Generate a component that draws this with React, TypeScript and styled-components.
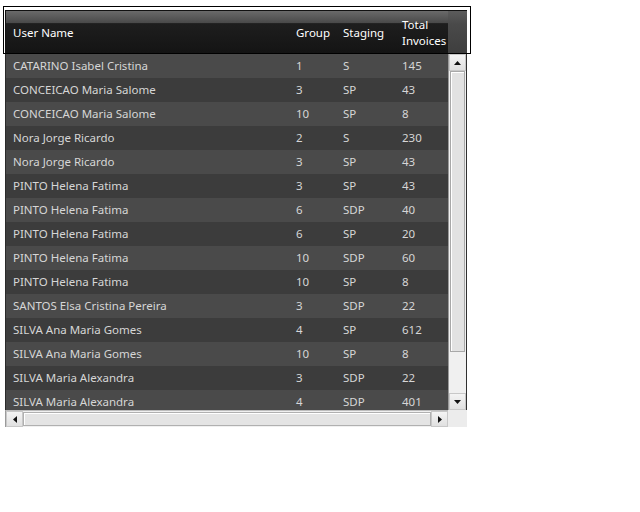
import React from "react";
import styled, { createGlobalStyle } from "styled-components";

const Global = createGlobalStyle`
  html, body { margin: 0; padding: 0; background: #ffffff; }
  body { font-family: "Noto Sans", "Open Sans", sans-serif; }
`;

const Frame = styled.div`
  position: relative;
  margin: 10px 0 0 5px;
  width: 462px;
  display: flex;
  flex-direction: column;
`;

const Focus = styled.div`
  position: absolute;
  left: -2px;
  top: -4px;
  width: 468px;
  height: 48px;
  border: 1px solid #000;
  box-sizing: border-box;
  pointer-events: none;
`;

const Line = styled.div`
  display: flex;
`;

const COLS = "283px 47px 59px 54px";

const Header = styled.div`
  width: 443px;
  height: 44px;
  box-sizing: border-box;
  padding-top: 2px;
  display: grid;
  grid-template-columns: ${COLS};
  align-items: center;
  border-top: 1px solid #111;
  border-left: 1px solid #111;
  border-bottom: 1px solid #0a0a0a;
  background: linear-gradient(
    to bottom,
    #6a6a6a 0%,
    #4a4a4a 28%,
    #1e1e1e 30%,
    #141414 100%
  );
`;

const HeaderFiller = styled.div`
  width: 19px;
  height: 44px;
  box-sizing: border-box;
  border-top: 1px solid #111;
  background: linear-gradient(to bottom, #5c5c5c 0%, #4a4a4a 30%, #3e3e3e 100%);
`;

const HeadCell = styled.div`
  padding-left: 7px;
  color: #ffffff;
  font-size: 11.5px;
  line-height: 16px;
`;

const Rows = styled.div`
  width: 443px;
  height: 356px;
  box-sizing: border-box;
  overflow: hidden;
  border-left: 1px solid #2a2a2a;
  background: #404040;
`;

const Row = styled.div<{ $alt: boolean }>`
  display: grid;
  grid-template-columns: ${COLS};
  height: 24px;
  box-sizing: border-box;
  padding-bottom: 2px;
  align-items: center;
  background: ${(p) => (p.$alt ? "#3c3c3c" : "#4a4a4a")};
`;

const Cell = styled.div`
  padding-left: 7px;
  color: #d6d6d6;
  font-size: 11.5px;
  white-space: nowrap;
`;

const VScroll = styled.div`
  width: 19px;
  height: 356px;
  box-sizing: border-box;
  display: flex;
  flex-direction: column;
  background: #f0f0f0;
  border-left: 1px solid #9a9a9a;
  border-right: 1px solid #303030;
`;

const ArrowBtn = styled.div<{ $w: number; $h: number }>`
  width: ${(p) => p.$w}px;
  height: ${(p) => p.$h}px;
  flex: none;
  box-sizing: border-box;
  display: flex;
  align-items: center;
  justify-content: center;
  background: linear-gradient(to bottom, #f4f4f4, #e0e0e0);
  border: 1px solid #c8c8c8;
`;

const VThumb = styled.div`
  flex: none;
  height: 281px;
  box-sizing: border-box;
  margin: 0 1px;
  background: #e2e2e2;
  border: 1px solid #a8a8a8;
  box-shadow: inset 1px 1px 0 #ffffff;
`;

const Track = styled.div`
  flex: 1;
`;

const HScroll = styled.div`
  width: 443px;
  height: 17px;
  box-sizing: border-box;
  display: flex;
  background: #f0f0f0;
  border-top: 1px solid #bdbdbd;
  border-left: 1px solid #9a9a9a;
`;

const HThumb = styled.div`
  flex: 1;
  box-sizing: border-box;
  margin: 1px 0;
  background: #e4e4e4;
  border: 1px solid #b0b0b0;
  box-shadow: inset 1px 1px 0 #ffffff;
`;

const Corner = styled.div`
  width: 19px;
  height: 17px;
  background: #ececec;
`;

const Tri = ({ dir }: { dir: "up" | "down" | "left" | "right" }) => {
  const pts = {
    up: "0,4 7,4 3.5,0",
    down: "0,0 7,0 3.5,4",
    left: "4,0 4,7 0,3.5",
    right: "0,0 0,7 4,3.5",
  }[dir];
  const vertical = dir === "up" || dir === "down";
  return (
    <svg width={vertical ? 7 : 4} height={vertical ? 4 : 7} viewBox={vertical ? "0 0 7 4" : "0 0 4 7"}>
      <polygon points={pts} fill="#111" />
    </svg>
  );
};

const data: [string, string, string, string][] = [
  ["CATARINO Isabel Cristina", "1", "S", "145"],
  ["CONCEICAO Maria Salome", "3", "SP", "43"],
  ["CONCEICAO Maria Salome", "10", "SP", "8"],
  ["Nora Jorge Ricardo", "2", "S", "230"],
  ["Nora Jorge Ricardo", "3", "SP", "43"],
  ["PINTO Helena Fatima", "3", "SP", "43"],
  ["PINTO Helena Fatima", "6", "SDP", "40"],
  ["PINTO Helena Fatima", "6", "SP", "20"],
  ["PINTO Helena Fatima", "10", "SDP", "60"],
  ["PINTO Helena Fatima", "10", "SP", "8"],
  ["SANTOS Elsa Cristina Pereira", "3", "SDP", "22"],
  ["SILVA Ana Maria Gomes", "4", "SP", "612"],
  ["SILVA Ana Maria Gomes", "10", "SP", "8"],
  ["SILVA Maria Alexandra", "3", "SDP", "22"],
  ["SILVA Maria Alexandra", "4", "SDP", "401"],
];

export default function App() {
  return (
    <>
      <Global />
      <Frame>
        <Line>
          <Header>
            <HeadCell>User Name</HeadCell>
            <HeadCell>Group</HeadCell>
            <HeadCell>Staging</HeadCell>
            <HeadCell>
              Total
              <br />
              Invoices
            </HeadCell>
          </Header>
          <HeaderFiller />
        </Line>
        <Line>
          <Rows>
            {data.map((r, i) => (
              <Row key={i} $alt={i % 2 === 1}>
                {r.map((c, j) => (
                  <Cell key={j}>{c}</Cell>
                ))}
              </Row>
            ))}
          </Rows>
          <VScroll>
            <ArrowBtn $w={17} $h={17}>
              <Tri dir="up" />
            </ArrowBtn>
            <VThumb />
            <Track />
            <ArrowBtn $w={17} $h={17}>
              <Tri dir="down" />
            </ArrowBtn>
          </VScroll>
        </Line>
        <Line>
          <HScroll>
            <ArrowBtn $w={17} $h={16}>
              <Tri dir="left" />
            </ArrowBtn>
            <HThumb />
            <ArrowBtn $w={17} $h={16}>
              <Tri dir="right" />
            </ArrowBtn>
          </HScroll>
          <Corner />
        </Line>
        <Focus />
      </Frame>
    </>
  );
}
